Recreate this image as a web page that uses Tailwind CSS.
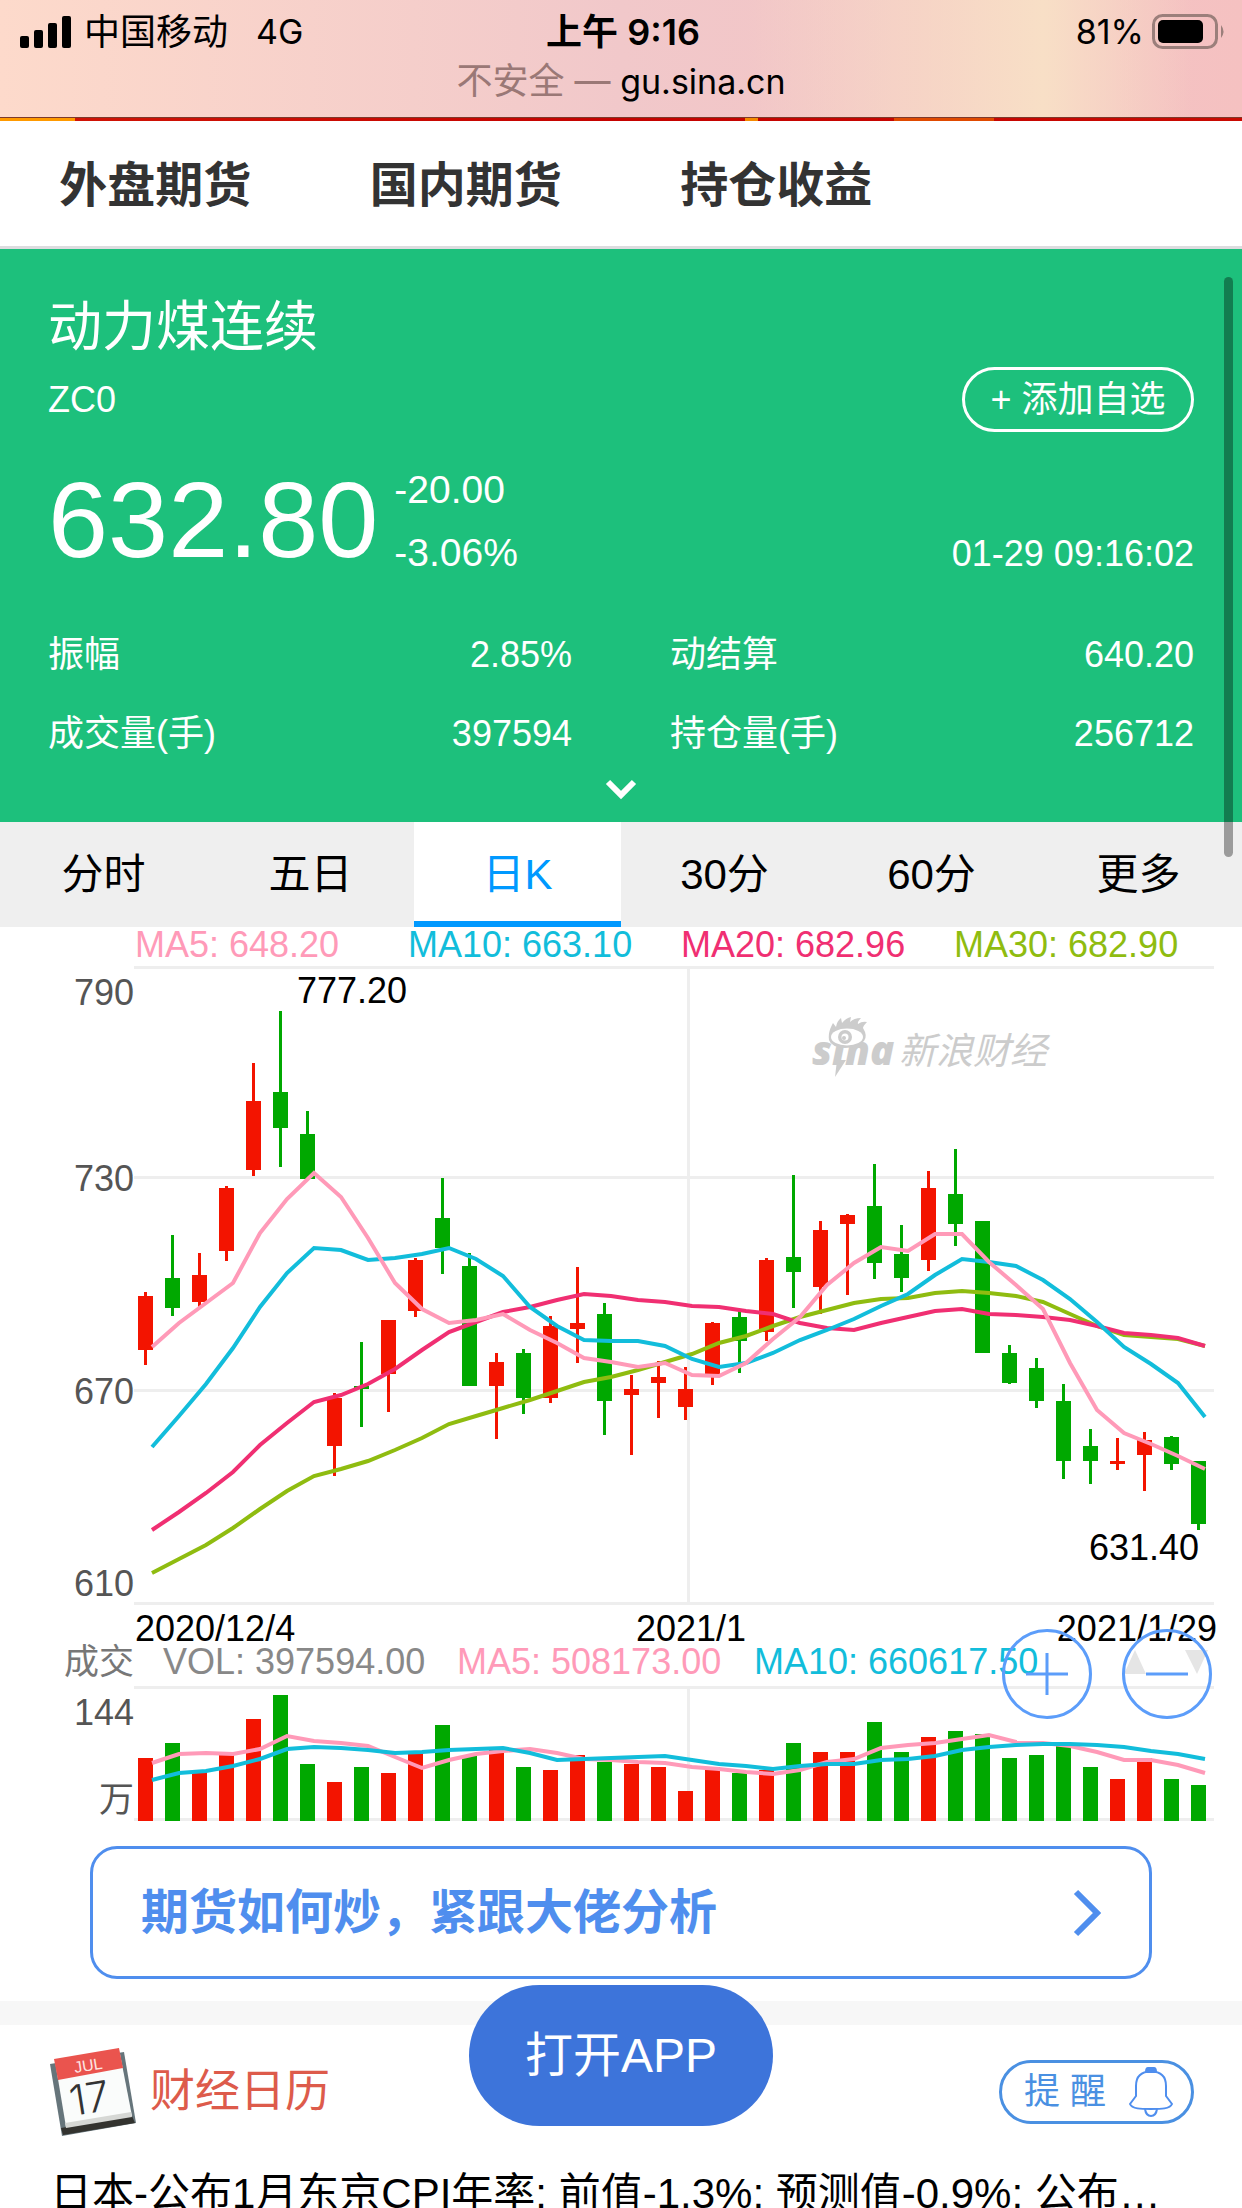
<!DOCTYPE html>
<html lang="zh-CN">
<head>
    <meta charset="UTF-8">
    <meta name="viewport" content="width=device-width, initial-scale=1.0">
    <title>动力煤连续 ZC0</title>
    <script src="https://cdn.jsdelivr.net/npm/@tailwindcss/browser@4"></script>
</head>
<body class="bg-white">
<div class="relative h-screen overflow-hidden text-[36px] leading-[48px] text-black font-['Liberation_Sans','Noto_Sans_CJK_SC',sans-serif]">

    <!-- status bar and address -->
    <header class="h-[118px] border-b border-[#7d3a2c] bg-linear-to-r from-[#fddacb] via-[#f1c8ca] to-[#f5c1c1] font-['Inter','Noto_Sans_CJK_SC',sans-serif]">
        <div class="h-full bg-linear-to-r from-transparent from-60% via-[#f8dfc6] via-84% to-transparent to-96%">
            <div class="grid grid-cols-3 items-center pt-2 pl-5 pr-4">
                <div class="flex items-center">
                    <svg class="w-[52px] h-8" viewBox="0 0 52 32">
                        <rect x="0" y="20" width="9" height="12" rx="2"/>
                        <rect x="14" y="14" width="9" height="18" rx="2"/>
                        <rect x="28" y="7" width="9" height="25" rx="2"/>
                        <rect x="42" y="0" width="9" height="32" rx="2"/>
                    </svg>
                    <span class="ml-3">中国移动</span>
                    <span class="ml-7 text-[34px]">4G</span>
                </div>
                <div class="text-center font-semibold">上午 9:16</div>
                <div class="flex items-center justify-end gap-2">
                    <span class="text-[34px]">81%</span>
                    <svg class="w-[74px] h-9" viewBox="0 0 74 36">
                        <rect x="1.5" y="1.5" width="63" height="32" rx="9" fill="none" stroke="#9b7f7b" stroke-width="3"/>
                        <rect x="6" y="6" width="45" height="23" rx="5"/>
                        <path d="M69 11 q5 6.500 0 13z" fill="#9b7f7b"/>
                    </svg>
                </div>
            </div>
            <div class="text-center text-[34px] leading-[50px]"><span class="text-[36px] text-[#9a7876]">不安全 —</span> gu.sina.cn</div>
        </div>
    </header>
    <div class="flex h-[3px] bg-linear-to-r from-[#d11507] via-[#c50200] to-[#c90a02]">
        <div class="w-[6%] bg-[#ff9a00]"></div>
        <div class="w-[1%] ml-[54%] bg-[#f58a00]"></div>
        <div class="w-[8%] ml-[11%] bg-[#e04a00]"></div>
    </div>

    <nav class="grid grid-cols-4 h-32 items-center pt-1 border-b-3 border-[#dcdcdf] text-center text-[48px] leading-[64px] font-bold text-[#333]">
        <a href="#">外盘期货</a>
        <a href="#">国内期货</a>
        <a href="#">持仓收益</a>
    </nav>

    <!-- quote -->
    <section class="bg-[#1dc07c] px-12 pt-[46px] pb-5 text-white">
        <h1 class="text-[54px] leading-[64px]">动力煤连续</h1>
        <div class="flex items-center justify-between mt-2">
            <span>ZC0</span>
            <button class="h-[65px] w-[232px] rounded-full border-3 border-white">+ 添加自选</button>
        </div>
        <div class="flex items-end mt-6">
            <strong class="text-[108px] leading-[128px] font-normal">632.80</strong>
            <div class="ml-4 text-[39px] leading-[63px]">
                <div>-20.00</div>
                <div>-3.06%</div>
            </div>
            <time class="ml-auto mb-[6px]">01-29 09:16:02</time>
        </div>
        <dl class="grid grid-cols-2 gap-x-[98px] gap-y-[31px] mt-[47px]">
            <div class="flex justify-between"><dt>振幅</dt><dd>2.85%</dd></div>
            <div class="flex justify-between"><dt>动结算</dt><dd>640.20</dd></div>
            <div class="flex justify-between"><dt>成交量(手)</dt><dd>397594</dd></div>
            <div class="flex justify-between"><dt>持仓量(手)</dt><dd>256712</dd></div>
        </dl>
        <button class="block mx-auto mt-5" aria-label="展开">
            <svg class="w-8 h-6" viewBox="0 0 32 24"><path d="M3 4 L16 17 L29 4" fill="none" stroke="#fff" stroke-width="6"/></svg>
        </button>
    </section>

    <div class="grid grid-cols-6 h-[105px] bg-[#efefef] text-[42px]">
        <button>分时</button>
        <button>五日</button>
        <button class="bg-white text-[#0099ff] border-b-6 pt-[6px] border-[#0099ff]">日K</button>
        <button>30分</button>
        <button>60分</button>
        <button>更多</button>
    </div>

    <!-- K line and volume -->
    <div class="relative">
        <svg id="chart" class="w-full overflow-visible" viewBox="0 927 1242 895" font-size="36">
            <g stroke="#eee" stroke-width="3">
                <path d="M134 967.500H1214M134 1177.500H1214M134 1390.500H1214M134 1603.500H1214M134 1687.500H1214M134 1819.500H1214"/>
                <path d="M688.500 969V1602M688.500 1689V1818"/>
            </g>
            <g>
                <text x="135" y="957" fill="#ff9ab8">MA5: 648.20</text>
                <text x="408" y="957" fill="#12bddb">MA10: 663.10</text>
                <text x="681" y="957" fill="#f02f72">MA20: 682.96</text>
                <text x="954" y="957" fill="#8fbc10">MA30: 682.90</text>
            </g>
            <g fill="#555" text-anchor="end">
                <text x="134" y="1005">790</text>
                <text x="134" y="1191">730</text>
                <text x="134" y="1404">670</text>
                <text x="134" y="1596">610</text>
                <text x="134" y="1674" font-size="35" fill="#777">成交</text>
                <text x="134" y="1725">144</text>
                <text x="134" y="1812" font-size="35">万</text>
            </g>
            <!-- watermark -->
            <g fill="#ccc">
                <text x="812" y="1065" font-family="Open Sans, sans-serif" font-weight="800" font-style="italic" font-size="40">sina</text>
                <path d="M837 1060 L846 1060 L835 1077z"/>
                <path d="M829 1040 C828 1032 831 1027 833 1023 L836 1027 Q837 1021 841 1018 L842 1023 Q846 1018 851 1017 L850 1022 Q854 1018 861 1018 Q857 1022 858 1024 Q862 1021 867 1022 Q863 1026 863 1028 Q868 1036 864 1041 Q857 1048 845 1048 Q831 1047 829 1040z"/>
                <ellipse cx="847" cy="1037" rx="16" ry="8.500" fill="#fff"/>
                <circle cx="845" cy="1037" r="7"/>
                <circle cx="845" cy="1037" r="3.500" fill="#fff"/>
                <circle cx="844" cy="1038" r="2"/>
                <text x="899" y="1064" font-size="37" font-style="italic">新浪财经</text>
            </g>
            <g id="candles"></g>
            <g id="lines" fill="none" stroke-width="4"></g>
            <text x="297" y="1003">777.20</text>
            <text x="1199" y="1560" text-anchor="end">631.40</text>
            <text x="135" y="1641">2020/12/4</text>
            <text x="691" y="1641" text-anchor="middle">2021/1</text>
            <text x="1217" y="1641" text-anchor="end">2021/1/29</text>
            <text x="163" y="1674" fill="#888">VOL: 397594.00</text>
            <text x="457" y="1674" fill="#ff9ab8">MA5: 508173.00</text>
            <text x="754" y="1674" fill="#12bddb">MA10: 660617.50</text>
            <path d="M1135 1650 L1146 1674 H1124z M1185 1650 H1208 L1197 1674z" fill="#e5e5e5"/>
        </svg>
        <div class="absolute right-[30px] bottom-[103px] flex gap-[30px]">
            <button class="size-[90px]" aria-label="放大">
                <svg viewBox="0 0 90 90" fill="none" stroke="#5c9dfa" stroke-width="3"><circle cx="45" cy="45" r="43.500"/><path d="M24 45H66M45 24V66"/></svg>
            </button>
            <button class="size-[90px]" aria-label="缩小">
                <svg viewBox="0 0 90 90" fill="none" stroke="#5c9dfa" stroke-width="3"><circle cx="45" cy="45" r="43.500"/><path d="M24 45H66"/></svg>
            </button>
        </div>
    </div>

    <a href="#" class="flex items-center justify-between h-[133px] mx-[90px] mt-6 pl-12 pr-12 rounded-[27px] border-3 border-[#4f8eee] text-[48px] leading-[64px] font-bold text-[#4f8eee]">
        期货如何炒，紧跟大佬分析
        <svg class="w-7 h-12" viewBox="0 0 28 48"><path d="M3 3 L24 24 L3 45" fill="none" stroke="#4f8eee" stroke-width="6"/></svg>
    </a>

    <div class="h-6 mt-[22px] bg-[#f7f7f7]"></div>

    <!-- calendar -->
    <section class="px-12 pt-[22px]">
        <div class="flex items-center">
            <svg class="w-[90px] h-[90px]" viewBox="0 0 90 90">
                <path d="M2 17 L76 5 L88 76 L14 89z" fill="#66757b"/>
                <path d="M13 81 L84 69 L87 76 L15 88z" fill="#33332f"/>
                <path d="M7 14 L71 2 L84 69 L18 80z" fill="#fafcfb"/>
                <path d="M17 76 L83 65 L84 70 L18 81z" fill="#d6d8d5"/>
                <path d="M6 12 L71 1 L75 21 L10 33z" fill="#ea544e"/>
                <text x="27" y="26" font-size="16" fill="#fde5e2" transform="rotate(-9 27 26)">JUL</text>
                <text x="24" y="69" font-size="42" fill="#333" transform="rotate(-9 24 69)" font-family="Inter, sans-serif" font-weight="300">17</text>
            </svg>
            <h2 class="ml-3 text-[45px] text-[#dd5b4b]">财经日历</h2>
            <button class="ml-auto flex items-center justify-between w-[195px] h-16 pl-[22px] pr-[18px] rounded-full border-3 border-[#4a90e2] text-[#4a90e2]">
                提 醒
                <svg class="w-11 h-[50px]" viewBox="0 0 44 50" fill="none" stroke="#4f8eee" stroke-width="2">
                    <path d="M19 1h6q2 0 2 4H17q0-4 2-4z" fill="#4f8eee"/>
                    <path d="M7 29 V19 C7 9 13 4.500 22 4.500 S37 9 37 19 V29 L43 37 C41 42 32 42 22 42 S3 42 1 37z"/>
                    <path d="M16 42 Q17 49 22 49 T28 42"/>
                </svg>
            </button>
        </div>
        <p class="mt-[27px] px-[2px] text-[42px] leading-[60px] truncate">日本-公布1月东京CPI年率: 前值-1.3%; 预测值-0.9%; 公布值-0.5%</p>
    </section>

    <a href="#" class="absolute left-1/2 -translate-x-1/2 bottom-[82px] flex items-center justify-center w-[304px] h-[141px] rounded-full bg-[#3d74da] text-[48px] text-white">打开APP</a>
    <div class="absolute right-[9px] top-[277px] w-[9px] h-[580px] rounded-full bg-black/35"></div>
</div>

<script>
    const STEP = 27;
    const RED = '#f31400';
    const GREEN = '#00a800';

    // [up, high, body top, body bottom, low, volume top]
    const candles = [
        [1,1292,1296,1350,1365,1758],[0,1235,1278,1308,1316,1743],[1,1253,1275,1302,1309,1771],[1,1186,1188,1251,1261,1755],
        [1,1063,1101,1170,1176,1719],[0,1011,1092,1128,1167,1695],[0,1111,1134,1179,1179,1764],[1,1393,1398,1446,1476,1782],
        [0,1342,1386,1389,1427,1767],[1,1320,1320,1374,1412,1773],[1,1258,1260,1311,1317,1753],[0,1178,1218,1248,1274,1725],
        [0,1253,1266,1386,1386,1755],[1,1353,1362,1386,1439,1750],[0,1349,1353,1398,1414,1767],[1,1316,1326,1398,1403,1770],
        [1,1267,1323,1329,1363,1755],[0,1303,1314,1401,1435,1762],[1,1375,1389,1395,1455,1764],[1,1361,1377,1383,1418,1767],
        [1,1367,1389,1407,1420,1791],[1,1322,1323,1376,1385,1767],[0,1311,1317,1341,1373,1773],[1,1258,1260,1332,1341,1770],
        [0,1175,1257,1272,1308,1743],[1,1221,1230,1287,1314,1752],[1,1214,1215,1224,1295,1752],[0,1164,1206,1263,1279,1722],
        [0,1225,1254,1278,1292,1752],[1,1171,1188,1260,1271,1737],[0,1149,1194,1224,1246,1731],[0,1221,1221,1353,1353,1734],
        [0,1345,1353,1383,1384,1758],[0,1358,1368,1401,1408,1755],[0,1384,1401,1461,1479,1745],[0,1429,1446,1461,1484,1767],
        [1,1438,1461,1464,1470,1779],[1,1432,1440,1455,1491,1758],[0,1436,1437,1464,1470,1779],[0,1461,1461,1524,1530,1785]
    ];

    const lines = [
        ['#8fbc10', [1573,1559,1545,1528,1509,1491,1476,1469,1461,1450,1438,1424,1416,1408,1400,1391,1382,1377,1370,1362,1354,1343,1336,1326,1317,1310,1303,1299,1298,1293,1291,1293,1296,1302,1314,1326,1335,1337,1339,1346]],
        ['#f02f72', [1530,1512,1493,1472,1445,1423,1402,1395,1384,1369,1350,1332,1322,1312,1307,1300,1294,1296,1300,1302,1306,1307,1311,1314,1323,1328,1330,1323,1317,1311,1309,1314,1315,1317,1320,1326,1333,1335,1338,1346]],
        ['#12bddb', [1447,1416,1384,1348,1307,1273,1248,1250,1260,1258,1254,1248,1259,1276,1307,1326,1340,1341,1341,1346,1359,1367,1363,1353,1340,1330,1319,1306,1294,1275,1259,1262,1266,1280,1299,1322,1347,1364,1383,1417]],
        ['#ff9ab8', [1347,1323,1303,1283,1233,1199,1173,1197,1238,1283,1309,1323,1320,1314,1330,1343,1358,1362,1367,1363,1375,1376,1363,1339,1317,1285,1263,1247,1251,1234,1234,1262,1285,1309,1363,1410,1433,1444,1456,1469]],
        ['#ff9ab8', [1763,1754,1753,1754,1749,1736,1741,1743,1746,1757,1768,1760,1754,1751,1749,1753,1759,1760,1762,1763,1767,1769,1772,1774,1770,1762,1759,1748,1745,1743,1739,1735,1742,1743,1746,1752,1760,1760,1765,1773]],
        ['#12bddb', [1780,1773,1771,1766,1759,1749,1747,1748,1750,1753,1752,1750,1749,1748,1753,1760,1759,1758,1757,1756,1760,1764,1766,1769,1766,1764,1764,1760,1759,1756,1750,1747,1745,1744,1744,1745,1747,1751,1754,1759]]
    ];

    document.getElementById('candles').innerHTML = candles.map(([up, high, top, bottom, low, vol], i) => {
        const x = 138 + STEP * i;
        return `<g fill="${up ? RED : GREEN}">
            <rect x="${x + 6}" y="${high}" width="3" height="${low - high}"/>
            <rect x="${x}" y="${top}" width="15" height="${bottom - top}"/>
            <rect x="${x}" y="${vol}" width="15" height="${1821 - vol}"/>
        </g>`;
    }).join('');

    document.getElementById('lines').innerHTML = lines.map(([color, ys]) => {
        const points = ys.map((y, i) => `${152 + STEP * i},${y}`).join(' ');
        return `<polyline stroke="${color}" points="${points}"/>`;
    }).join('');
</script>
</body>
</html>
